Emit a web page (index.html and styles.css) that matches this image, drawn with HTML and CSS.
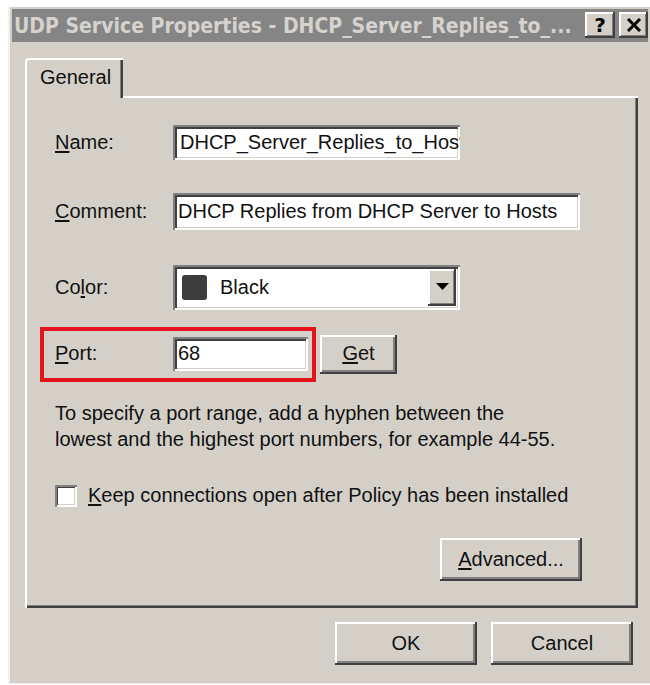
FILE: index.html
```html
<!DOCTYPE html>
<html lang="en">
<head>
<meta charset="utf-8">
<title>UDP Service Properties</title>
<link rel="stylesheet" href="styles.css">
</head>
<body>
<div class="window">
  <div class="titlebar">
    <span class="title">UDP Service Properties - DHCP_Server_Replies_to_...</span>
    <div class="caption-buttons">
      <button class="cap-btn help">?</button>
      <button class="cap-btn close" aria-label="Close">
        <svg width="16" height="14" viewBox="0 0 16 14"><path d="M2 1 L14 13 M14 1 L2 13" stroke="#000" stroke-width="3" fill="none"/></svg>
      </button>
    </div>
  </div>
  <div class="client">
    <div class="tabs"><div class="tab">General</div></div>
    <div class="panel">
      <div class="field row-name">
        <span class="label"><u>N</u>ame:</span>
        <div class="edit edit-name">DHCP_Server_Replies_to_Hosts</div>
      </div>
      <div class="field row-comment">
        <span class="label"><u>C</u>omment:</span>
        <div class="edit edit-comment">DHCP Replies from DHCP Server to Hosts</div>
      </div>
      <div class="field row-color">
        <span class="label">Co<u>l</u>or:</span>
        <div class="combo">
          <span class="swatch"></span>
          <span class="combo-text">Black</span>
          <span class="combo-arrow"><svg width="13" height="7" viewBox="0 0 13 7"><path d="M0 0 H13 L6.5 7 Z" fill="#000"/></svg></span>
        </div>
      </div>
      <div class="port-row">
        <div class="highlight">
          <span class="label"><u>P</u>ort:</span>
          <div class="edit edit-port">68</div>
        </div>
        <button class="btn btn-get"><u>G</u>et</button>
      </div>
      <p class="hint">To specify a port range, add a hyphen between the<br>lowest and the highest port numbers, for example 44-55.</p>
      <div class="check-row">
        <span class="checkbox"></span>
        <span class="check-label"><u>K</u>eep connections open after Policy has been installed</span>
      </div>
      <div class="advanced-row">
        <button class="btn btn-advanced"><u>A</u>dvanced...</button>
      </div>
    </div>
    <div class="dialog-buttons">
      <button class="btn btn-dialog">OK</button>
      <button class="btn btn-dialog">Cancel</button>
    </div>
  </div>
</div>
</body>
</html>
```
FILE: styles.css
```css
html, body {
  margin: 0;
  padding: 0;
  background: #fff;
  overflow: hidden;
}

body {
  font-family: "Liberation Sans", Arial, sans-serif;
  font-size: 20px;
  color: #111;
}

button {
  font: inherit;
  color: inherit;
  padding: 0;
  border: none;
  cursor: default;
}

u {
  text-decoration-thickness: 2px;
  text-underline-offset: 2px;
}

/* window frame */
.window {
  margin: 5px 0 0 8px;
  width: 642px;
  height: 679px;
  box-sizing: border-box;
  background: #d4d0c8;
  border-top: 2px solid #fff;
  border-left: 2px solid #f2f0ec;
  border-bottom: 1px solid #eceae6;
  padding: 2px 2px 0 2px;
  display: flex;
  flex-direction: column;
}

/* inactive caption */
.titlebar {
  height: 33px;
  background: #858585;
  display: flex;
  align-items: center;
  justify-content: space-between;
  padding-left: 2px;
  flex-shrink: 0;
}

.title {
  color: #d6d2ce;
  font-family: "DejaVu Sans Condensed", "DejaVu Sans", sans-serif;
  font-weight: bold;
  font-size: 21px;
  white-space: nowrap;
}

.caption-buttons {
  display: flex;
  gap: 4px;
  align-self: flex-start;
  margin-top: 3px;
}

.cap-btn {
  width: 30px;
  height: 26px;
  background: #d4d0c8;
  box-shadow: inset -2px -2px 0 #404040, inset 2px 2px 0 #fff, inset -3px -3px 0 #808080;
  display: flex;
  align-items: center;
  justify-content: center;
}

.cap-btn.close {
  width: 29px;
}

.help {
  font-family: "DejaVu Sans", sans-serif;
  font-weight: bold;
  font-size: 20px;
  color: #000;
  line-height: 1;
}

/* dialog client area */
.client {
  padding: 16px 10px 0 13px;
  display: flex;
  flex-direction: column;
}

.tabs {
  display: flex;
  position: relative;
  z-index: 1;
  margin-bottom: -2px;
}

.tab {
  width: 98px;
  height: 40px;
  box-sizing: border-box;
  background: #d4d0c8;
  border-top: 2px solid #fff;
  border-left: 2px solid #fff;
  border-top-left-radius: 4px;
  box-shadow: inset -2px 0 0 #404040, inset -3px 0 0 #808080;
  padding: 6px 0 0 13px;
  font-size: 20px;
}

.panel {
  height: 512px;
  box-sizing: border-box;
  border-top: 2px solid #fff;
  border-left: 2px solid #fff;
  box-shadow: inset -2px -2px 0 #404040, inset -3px -3px 0 #808080;
  padding: 0 0 0 28px;
  display: flex;
  flex-direction: column;
}

.field {
  display: grid;
  grid-template-columns: 118px auto;
  align-items: center;
  justify-items: start;
}

.label {
  white-space: nowrap;
}

/* sunken edit boxes */
.edit {
  background: #fff;
  box-sizing: border-box;
  box-shadow: inset 2px 2px 0 #808080, inset -2px -2px 0 #fff, inset 4px 4px 0 #404040, inset -3px -3px 0 #d4d0c8;
  padding: 0 0 0 7px;
  display: flex;
  align-items: center;
  white-space: nowrap;
  overflow: hidden;
}

.row-name {
  margin-top: 27px;
}

.edit-name {
  width: 287px;
  height: 35px;
}

.row-comment {
  margin-top: 33px;
}

.edit-comment {
  width: 407px;
  height: 37px;
  padding-left: 5px;
}

.row-color {
  margin-top: 35px;
}

.combo {
  width: 287px;
  height: 45px;
  box-sizing: border-box;
  background: #fff;
  box-shadow: inset 2px 2px 0 #808080, inset -2px -2px 0 #fff, inset 4px 4px 0 #404040, inset -3px -3px 0 #d4d0c8;
  display: flex;
  align-items: center;
  padding: 0 4px 0 9px;
}

.swatch {
  width: 25px;
  height: 25px;
  border-radius: 3px;
  background: #3c3c3c;
}

.combo-text {
  margin-left: 13px;
  flex: 1;
}

.combo-arrow {
  width: 28px;
  height: 37px;
  box-sizing: border-box;
  background: #d4d0c8;
  box-shadow: inset -2px -2px 0 #404040, inset 2px 2px 0 #fff, inset -3px -3px 0 #808080;
  display: flex;
  align-items: center;
  justify-content: center;
  padding-bottom: 2px;
}

/* port row with red highlight */
.port-row {
  margin: 17px 0 0 -15px;
  display: flex;
  align-items: center;
}

.highlight {
  width: 276px;
  height: 55px;
  box-sizing: border-box;
  border: 4px solid #e4141c;
  display: grid;
  grid-template-columns: 118px auto;
  align-items: center;
  padding: 0 0 2px 11px;
}

.edit-port {
  width: 135px;
  height: 34px;
  padding-left: 5px;
}

.btn {
  background: #d4d0c8;
  box-shadow: inset -2px -2px 0 #404040, inset 2px 2px 0 #fff, inset -4px -4px 0 #808080;
  display: flex;
  align-items: center;
  justify-content: center;
  box-sizing: border-box;
}

.btn-get {
  width: 77px;
  height: 39px;
  margin-left: 4px;
  padding-bottom: 2px;
}

.hint {
  margin: 18px 0 0 0;
  line-height: 26px;
}

.check-row {
  margin-top: 32px;
  display: flex;
  align-items: center;
}

.checkbox {
  width: 22px;
  height: 22px;
  box-sizing: border-box;
  background: #fff;
  box-shadow: inset 2px 2px 0 #808080, inset -2px -2px 0 #fff, inset 3px 3px 0 #404040, inset -3px -3px 0 #d4d0c8;
}

.check-label {
  margin-left: 11px;
}

.advanced-row {
  display: flex;
  justify-content: flex-end;
  margin: 31px 56px 0 0;
}

.btn-advanced {
  width: 142px;
  height: 43px;
}

.dialog-buttons {
  display: flex;
  justify-content: flex-end;
  gap: 14px;
  margin: 14px 5px 0 0;
}

.btn-dialog {
  width: 142px;
  height: 43px;
}
```
